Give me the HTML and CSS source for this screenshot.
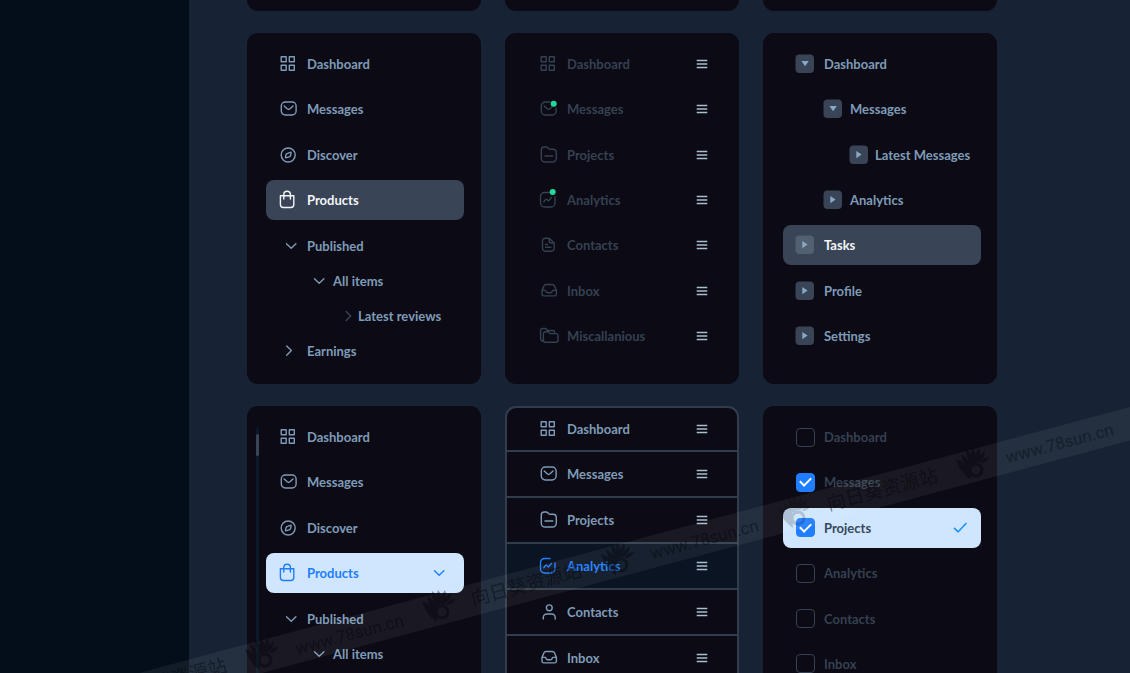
FILE: index.html
```html
<!DOCTYPE html>
<html lang="en">
<head>
<meta charset="utf-8">
<title>Sidebar menus</title>
<link rel="stylesheet" href="styles.css">
</head>
<body>
<svg class="defs" aria-hidden="true">
  <symbol id="grid" viewBox="0 0 20 20"><path d="M3.2 2.8h5v5h-5zM11.3 2.8h5v5h-5zM3.2 11.2h5v5h-5zM11.3 11.2h5v5h-5z"/></symbol>
  <symbol id="mail" viewBox="0 0 20 20"><rect x="3.3" y="3" width="14.8" height="13" rx="4"/><path d="M6.2 6.9l3 2.9q1.4 1.2 2.8 0l3-2.9"/></symbol>
  <symbol id="mail-open" viewBox="0 0 20 20"><path d="M12 3H7.3a4 4 0 0 0-4 4v5a4 4 0 0 0 4 4h6.8a4 4 0 0 0 4-4V9M6.2 6.9l3 2.9q1.4 1.2 2.8 0l2-2"/></symbol>
  <symbol id="compass" viewBox="0 0 20 20"><circle cx="10.2" cy="10" r="7"/><path d="M13 7.2q.2 4-1.9 4.6l-3.5 1.1q-.2-4 1.9-4.6z"/></symbol>
  <symbol id="bag" viewBox="0 0 20 20"><path d="M2.4 5.8h13.4v8.7a3 3 0 0 1-3 3H5.4a3 3 0 0 1-3-3zM5.8 9V4.500a3.300 3.300 0 0 1 6.600 0V9"/></symbol>
  <symbol id="folder" viewBox="0 0 20 20"><path d="M3.300 5a3 3 0 0 1 3-3h1.800q1 0 1.700.7l1 1.100q.5.500 1.300.500h2.800a3.400 3.400 0 0 1 3.400 3.400v5.500a3.800 3.800 0 0 1-3.800 3.800H7.100a3.800 3.800 0 0 1-3.800-3.800zM7 11h7.800"/></symbol>
  <symbol id="chart" viewBox="0 0 20 20"><path d="M12 2.500H6.500a4 4 0 0 0-4 4v6.500a4 4 0 0 0 4 4h6.500a4 4 0 0 0 4-4V7M5.800 11.700l1.900-2.300q.6-.6 1.200 0l.9 1q.6.600 1.200 0l2.500-3"/></symbol>
  <symbol id="doc" viewBox="0 0 20 20"><path d="M11.200 3.200H7.500a3 3 0 0 0-3 3v7a3 3 0 0 0 3 3h5.700a3 3 0 0 0 3-3V8zM11.200 3.200V6a2 2 0 0 0 2 2h3M7.500 9.500h2M7.500 12.300h5.400"/></symbol>
  <symbol id="tray" viewBox="0 0 20 20"><path d="M4 9.400l2-4.600q.6-1.300 2-1.300h6.400q1.400 0 2 1.300l2 4.600v3.800q0 1.700-1.700 1.700H5.700q-1.700 0-1.700-1.700zM4.200 9.400h3.300q.6 2.300 2.300 2.300h2.600q1.700 0 2.300-2.300h3.500"/></symbol>
  <symbol id="folders" viewBox="0 0 20 20" overflow="visible"><path d="M5.400 15.200a3 3 0 0 1-2.800-3V4.500q0-2 2-2h2.500q.8 0 1.400.7l1 1.300h5q2 0 2.100 1.800M5.400 7.800q0-2 2-2h2.500q.8 0 1.400.8l.7 1h6q2 0 2 2v4.700q0 2-2 2H7.400q-2 0-2-2z"/></symbol>
  <symbol id="user" viewBox="0 0 20 20"><circle cx="11.300" cy="5.800" r="2.900"/><path d="M5.300 17v-1.500a3.500 3.500 0 0 1 3.500-3.500h4.900a3.500 3.500 0 0 1 3.500 3.500v1.500"/></symbol>
  <symbol id="down" viewBox="0 0 12 12"><path d="M1.500 3.700L6.200 8.200 10.900 3.700"/></symbol>
  <symbol id="right" viewBox="0 0 12 12"><path d="M4.200 1.500L8.700 6 4.200 10.500"/></symbol>
  <symbol id="right-wide" viewBox="0 0 12 12"><path d="M1.700 1L6.400 5.500 1.700 10.200"/></symbol>
  <symbol id="bars" viewBox="0 0 12 12"><path d="M.7 2.500h10.600M.7 6h10.600M.7 9.500h10.600"/></symbol>
  <symbol id="tick" viewBox="0 0 14 12"><path d="M1.500 6.300L5.200 9.800 13 1.500"/></symbol>
  <symbol id="box-down" viewBox="0 0 20 20"><rect class="plate" x=".5" y=".5" width="18.500" height="18.500" rx="4"/><path class="solid" d="M6.400 7h7.400L10.100 12.300z"/></symbol>
  <symbol id="box-right" viewBox="0 0 20 20"><rect class="plate" x=".5" y=".5" width="18.500" height="18.500" rx="4"/><path class="solid" d="M7.300 5.900v7.400l5.300-3.700z"/></symbol>
  <symbol id="flower" viewBox="-22 -20 44 40" overflow="visible">
    <path d="M-20-7Q-9-3-6 4Q-5 9-5 14Q-16 7-20-7zM-15-12Q-5-6-5 3Q-8 5-9 1Q-14-5-15-12zM-10-17Q-3-11-2-3Q-5 0-7-4Q-10-10-10-17zM-4-18Q1-12 0-4Q-3-3-4-6Q-6-11-4-18zM3-18Q5-12 2-4Q-1-3-1-6Q-1-12 3-18zM9-15Q9-9 3-4Q1-5 2-7Q4-12 9-15zM13-9Q11-4 6-3Q3-3 5-5Q8-9 13-9z"/>
    <circle class="ring" cx="0" cy="4" r="6"/>
  </symbol>
</svg>

<div class="page">
  <aside class="rail"></aside>
  <main class="board">
    <section class="card card--tail"></section>
    <section class="card card--tail"></section>
    <section class="card card--tail"></section>

    <nav class="card" aria-label="Products menu">
      <div class="menu menu--short">
        <a class="item" href="#"><svg class="icon"><use href="#grid"/></svg>Dashboard</a>
        <a class="item" href="#"><svg class="icon"><use href="#mail"/></svg>Messages</a>
        <a class="item" href="#"><svg class="icon"><use href="#compass"/></svg>Discover</a>
        <a class="item item--active" href="#"><svg class="icon"><use href="#bag"/></svg>Products</a>
      </div>
      <div class="tree">
        <a class="branch" href="#"><svg class="chev"><use href="#down"/></svg>Published</a>
        <a class="branch branch--two" href="#"><svg class="chev"><use href="#down"/></svg>All items</a>
        <a class="branch branch--three" href="#"><svg class="chev chev--dim"><use href="#right"/></svg>Latest reviews</a>
        <a class="branch" href="#"><svg class="chev"><use href="#right-wide"/></svg>Earnings</a>
      </div>
    </nav>

    <nav class="card card--inset" aria-label="Sortable menu">
      <div class="menu menu--dim">
        <div class="item"><svg class="icon"><use href="#grid"/></svg><a href="#">Dashboard</a><button class="grip" aria-label="Move Dashboard"><svg><use href="#bars"/></svg></button></div>
        <div class="item"><svg class="icon"><use href="#mail-open"/><circle class="dot" cx="15.700" cy="4.800" r="3"/></svg><a href="#">Messages</a><button class="grip" aria-label="Move Messages"><svg><use href="#bars"/></svg></button></div>
        <div class="item"><svg class="icon"><use href="#folder"/></svg><a href="#">Projects</a><button class="grip" aria-label="Move Projects"><svg><use href="#bars"/></svg></button></div>
        <div class="item"><svg class="icon"><use href="#chart"/><circle class="dot" cx="14.700" cy="2" r="3"/></svg><a href="#">Analytics</a><button class="grip" aria-label="Move Analytics"><svg><use href="#bars"/></svg></button></div>
        <div class="item"><svg class="icon"><use href="#doc"/></svg><a href="#">Contacts</a><button class="grip" aria-label="Move Contacts"><svg><use href="#bars"/></svg></button></div>
        <div class="item"><svg class="icon"><use href="#tray"/></svg><a href="#">Inbox</a><button class="grip" aria-label="Move Inbox"><svg><use href="#bars"/></svg></button></div>
        <div class="item"><svg class="icon"><use href="#folders"/></svg><a href="#">Miscallanious</a><button class="grip" aria-label="Move Miscallanious"><svg><use href="#bars"/></svg></button></div>
      </div>
    </nav>

    <nav class="card card--wide" aria-label="Tree menu">
      <div class="menu">
        <a class="item" href="#"><svg class="icon"><use href="#box-down"/></svg>Dashboard</a>
        <a class="item item--two" href="#"><svg class="icon"><use href="#box-down"/></svg>Messages</a>
        <a class="item item--three" href="#"><svg class="icon"><use href="#box-right"/></svg>Latest Messages</a>
        <a class="item item--two" href="#"><svg class="icon"><use href="#box-right"/></svg>Analytics</a>
        <a class="item item--active" href="#"><svg class="icon icon--lit"><use href="#box-right"/></svg>Tasks</a>
        <a class="item" href="#"><svg class="icon"><use href="#box-right"/></svg>Profile</a>
        <a class="item" href="#"><svg class="icon"><use href="#box-right"/></svg>Settings</a>
      </div>
    </nav>

    <nav class="card" aria-label="Scrolling menu">
      <div class="track"><div class="thumb"></div></div>
      <div class="menu menu--short">
        <a class="item" href="#"><svg class="icon"><use href="#grid"/></svg>Dashboard</a>
        <a class="item" href="#"><svg class="icon"><use href="#mail"/></svg>Messages</a>
        <a class="item" href="#"><svg class="icon"><use href="#compass"/></svg>Discover</a>
        <a class="item item--light" href="#"><svg class="icon"><use href="#bag"/></svg>Products<svg class="chev chev--end"><use href="#down"/></svg></a>
      </div>
      <div class="tree">
        <a class="branch" href="#"><svg class="chev"><use href="#down"/></svg>Published</a>
        <a class="branch branch--two" href="#"><svg class="chev"><use href="#down"/></svg>All items</a>
      </div>
    </nav>

    <nav class="card card--lined" aria-label="Divided menu">
      <div class="row"><svg class="icon"><use href="#grid"/></svg><a href="#">Dashboard</a><button class="grip" aria-label="Move Dashboard"><svg><use href="#bars"/></svg></button></div>
      <div class="row"><svg class="icon"><use href="#mail"/></svg><a href="#">Messages</a><button class="grip" aria-label="Move Messages"><svg><use href="#bars"/></svg></button></div>
      <div class="row"><svg class="icon"><use href="#folder"/></svg><a href="#">Projects</a><button class="grip" aria-label="Move Projects"><svg><use href="#bars"/></svg></button></div>
      <div class="row row--active"><svg class="icon"><use href="#chart"/></svg><a href="#">Analytics</a><button class="grip" aria-label="Move Analytics"><svg><use href="#bars"/></svg></button></div>
      <div class="row"><svg class="icon"><use href="#user"/></svg><a href="#">Contacts</a><button class="grip" aria-label="Move Contacts"><svg><use href="#bars"/></svg></button></div>
      <div class="row"><svg class="icon"><use href="#tray"/></svg><a href="#">Inbox</a><button class="grip" aria-label="Move Inbox"><svg><use href="#bars"/></svg></button></div>
    </nav>

    <form class="card card--wide">
      <div class="menu menu--dim menu--checks">
        <label class="item"><input type="checkbox">Dashboard</label>
        <label class="item"><input type="checkbox" checked>Messages</label>
        <label class="item item--picked"><input type="checkbox" checked>Projects<svg class="tick"><use href="#tick"/></svg></label>
        <label class="item"><input type="checkbox">Analytics</label>
        <label class="item"><input type="checkbox">Contacts</label>
        <label class="item"><input type="checkbox">Inbox</label>
      </div>
    </form>
  </main>

  <svg class="ribbon" viewBox="0 0 1130 673" preserveAspectRatio="xMaxYMin slice">
    <path class="ribbon-band" d="M1130 407V440.500L262 673H139z"/>
    <g class="ribbon-ink">
      <text class="url" transform="translate(1061 449) rotate(-15)">www.78sun.cn</text>
      <text class="cjk" transform="translate(884 496) rotate(-15)">向日葵资源站</text>
      <text class="url" transform="translate(706 545) rotate(-15)">www.78sun.cn</text>
      <text class="cjk" transform="translate(528 591) rotate(-15)">向日葵资源站</text>
      <text class="url" transform="translate(351 640) rotate(-15)">www.78sun.cn</text>
      <text class="cjk" transform="translate(173 686) rotate(-15)">向日葵资源站</text>
      <use href="#flower" x="954" y="446" width="44" height="40"/>
      <use class="faint" href="#flower" x="776" y="494" width="44" height="40"/>
      <use href="#flower" x="599" y="541" width="44" height="40"/>
      <use href="#flower" x="420" y="588" width="44" height="40"/>
      <use href="#flower" x="243" y="636" width="44" height="40"/>
    </g>
  </svg>
</div>
</body>
</html>
```
FILE: styles.css
```css
:root {
  --text: #7e9cb8;
  --dim: #344152;
  --plate: #394456;
  --blue: #1f7dff;
  --card: #0c0a14;
}

* { box-sizing: border-box; }

body {
  margin: 0;
  background: #172335;
  color: var(--text);
  font: 700 13px/20px "Lato", "Noto Sans CJK SC", sans-serif;
}

a { color: inherit; text-decoration: none; }

svg {
  fill: none;
  stroke: currentColor;
  stroke-width: 1.4;
  stroke-linecap: round;
  stroke-linejoin: round;
}

.defs { position: absolute; width: 0; height: 0; }

.page {
  position: relative;
  display: flex;
  height: 100vh;
  overflow: hidden;
}

.rail { flex: 0 0 189px; background: #040e1b; }

.board {
  flex: 1;
  display: grid;
  grid-template-columns: repeat(3, minmax(0, 1fr));
  align-content: start;
  gap: 22px 24px;
  padding: 0 133px 0 58px;
}

.card {
  position: relative;
  display: flex;
  flex-direction: column;
  min-height: 351px;
  padding: 11px 17px 28px 19px;
  border-radius: 11px;
  background: var(--card);
  white-space: nowrap;
}

.card--tail { min-height: 11px; padding: 0; border-radius: 0 0 11px 11px; }
.card--inset { padding-left: 21px; }
.card--wide { padding-left: 20px; padding-right: 16px; }

.menu {
  flex: 1;
  display: flex;
  flex-direction: column;
  justify-content: space-between;
}

.menu--short { flex: 0 0 176px; }
.menu--dim { color: var(--dim); }
.menu--checks { flex: 0 0 267px; }

.item {
  display: flex;
  align-items: center;
  gap: 9px;
  height: 40px;
  padding: 0 14px 0 12px;
  border-radius: 8px;
}

.item--two { padding-left: 40px; gap: 7px; }
.item--three { padding-left: 66px; gap: 6px; }
.item--active { background: var(--plate); color: #f2f5f8; }
.item--light { background: #cfe6fe; color: var(--blue); }
.item--picked { background: #cfe6fe; color: #38475b; }

.icon { flex: none; width: 20px; height: 20px; overflow: visible; }
.plate { fill: var(--plate); stroke: none; }
.solid { fill: #86a9c6; stroke: none; }
.icon--lit { --plate: #526071; }
.dot { fill: #22d99b; stroke: none; }

.chev { flex: none; width: 12px; height: 12px; }
.chev--dim { color: var(--plate); }
.chev--end { margin-left: auto; margin-right: 5px; }
.tick { width: 14px; height: 12px; margin-left: auto; color: #1b92ff; stroke-width: 1.6; }

.tree { display: flex; flex-direction: column; margin-top: 8px; }

.branch {
  display: flex;
  align-items: center;
  gap: 10px;
  height: 35px;
  padding-left: 19px;
}

.branch--two { padding-left: 47px; gap: 8px; }
.branch--three { padding-left: 76px; gap: 4px; }

.grip {
  display: flex;
  margin-left: auto;
  padding: 0;
  border: 0;
  background: none;
  color: #a9bfce;
}

.grip svg { width: 12px; height: 12px; stroke-linecap: butt; }

.card--lined {
  padding: 0;
  border: 2px solid #313d4d;
  overflow: hidden;
}

.row {
  display: flex;
  align-items: center;
  gap: 9px;
  height: 46px;
  padding: 0 29px 0 31px;
  border-bottom: 2px solid #313d4d;
}

.row:first-child { height: 44px; }
.row--active { background: #0a1422; }
.row--active a, .row--active .icon { color: var(--blue); }

.track {
  position: absolute;
  top: 21px;
  bottom: 21px;
  left: 9px;
  width: 3px;
  border-radius: 2px;
  background: #0a1827;
}

.thumb { height: 22px; margin-top: 7px; border-radius: 2px; background: var(--plate); }

input[type="checkbox"] {
  appearance: none;
  flex: none;
  display: grid;
  place-items: center;
  width: 19px;
  height: 19px;
  margin: 0 0 0 1px;
  border: 1px solid #354254;
  border-radius: 4px;
}

input[type="checkbox"]:checked { border-color: var(--blue); background: var(--blue); }

input[type="checkbox"]:checked::after {
  content: "";
  width: 9px;
  height: 5px;
  margin-bottom: 3px;
  border: solid #fff;
  border-width: 0 0 2px 2px;
  transform: rotate(-45deg);
}

.ribbon {
  position: absolute;
  inset: 0;
  width: 100%;
  height: 100%;
  pointer-events: none;
  stroke: none;
}

.ribbon-band { fill: #fff; fill-opacity: 0.06; }
.ribbon-ink { fill: #03060c; opacity: 0.42; text-anchor: middle; }
.ring { fill: none; stroke: #03060c; stroke-width: 3; }
.faint { opacity: 0.4; }
.url { font: 400 17px "Roboto", sans-serif; }
.cjk { font: 400 19px "Noto Sans CJK SC", sans-serif; }
```
